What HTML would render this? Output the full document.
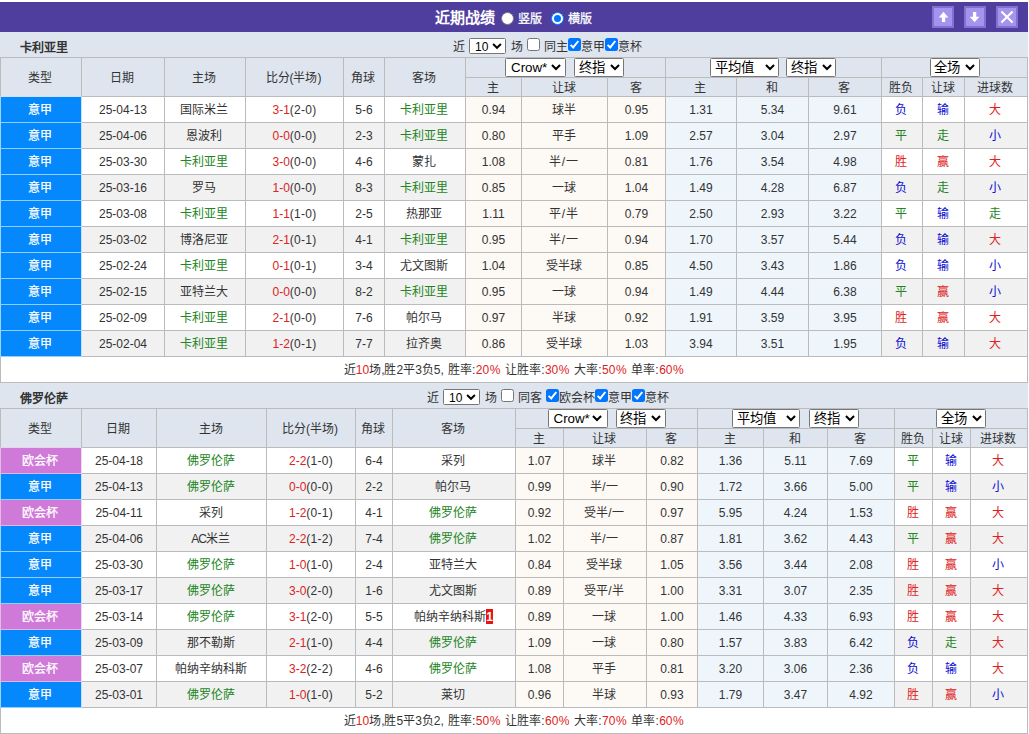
<!DOCTYPE html>
<html lang="zh-CN"><head><meta charset="utf-8"><title>近期战绩</title>
<style>
html,body{margin:0;padding:0;background:#fff;}
body{width:1029px;height:734px;overflow:hidden;position:relative;font-family:"Liberation Sans",sans-serif;font-size:12px;color:#333;}
#bar{position:absolute;left:0;top:2px;width:1028px;height:30px;background:#4f3e9e;}
#bar .ttl{position:absolute;left:435px;top:7px;font-size:15px;line-height:18px;font-weight:bold;color:#fff;white-space:nowrap;}
#bar .rd{position:absolute;top:10px;width:13px;height:13px;box-sizing:border-box;border:1px solid #767676;border-radius:50%;background:#fff;}
#bar .rd.on{border-color:#0075ff;}
#bar .rd.on i{position:absolute;left:1.7px;top:1.7px;width:7.6px;height:7.6px;border-radius:50%;background:#0075ff;}
#bar .rl{position:absolute;top:9px;line-height:16px;color:#fff;white-space:nowrap;}
#bar .btn{position:absolute;top:4px;width:22px;height:22px;box-sizing:border-box;border:2px solid #8272cf;background:#a494ee;}
#bar .btn svg{display:block;}
.strip{position:absolute;left:0;width:1028px;height:25px;background:#dee5ef;}
.strip .tn{position:absolute;left:20px;top:8px;line-height:16px;font-weight:bold;color:#333;white-space:nowrap;}
.ctl{position:absolute;top:0;height:25px;white-space:nowrap;font-size:0;}
.ctl>span{display:inline-block;vertical-align:top;font-size:12px;}
.ctl .c1{width:12px;margin-top:7px;line-height:16px;text-align:center;}
.ctl .c2{width:24px;margin-top:7px;line-height:16px;text-align:center;}
.ctl .c3{width:36px;margin-top:7px;line-height:16px;text-align:center;}
.ctl .sp{width:4px;height:1px;}
.cb{width:13px;height:13px;box-sizing:border-box;border:1px solid #767676;border-radius:2.5px;background:#fff;margin-top:6px;}
.cb.on{border:0;background:#0075ff;}
.cb svg{display:block;}
.sel{display:inline-block;box-sizing:border-box;height:19px;border:1px solid #767676;border-radius:1.5px;background:#fff;color:#000;font-size:13.33px;line-height:17px;text-align:left;position:relative;vertical-align:top;white-space:nowrap;}
.sel .st{padding-left:5px;}
.sel .st.cj{padding-left:3.5px;}
.sel .chev{position:absolute;right:3.5px;top:4.5px;}
.sel.s12{height:16px;font-size:12px;line-height:16px;margin-top:6px;}
.sel.s12 .chev{top:4px;right:3.5px;}
table.t{position:absolute;left:0;width:1028px;table-layout:fixed;border-collapse:separate;border-spacing:0;}
.t th,.t td{box-sizing:border-box;padding:0;margin:0;border:0 solid #bbb;border-right-width:1px;border-bottom-width:1px;text-align:center;font-weight:normal;font-size:12px;line-height:14px;white-space:nowrap;overflow:hidden;vertical-align:middle;}
.t th{background:#dee5ef;color:#333;border-top-width:0;padding:2px 2px 0 0;}
.t .h1 th{border-top-width:1px;height:21px;}
.t .h1 th[rowspan]{height:40px;}
.t .h2 th{height:19px;}
.t .first{border-left-width:1px;}
.t th.sc{font-size:0;line-height:0;vertical-align:top;padding:0;}
.t th.sc .gap{display:inline-block;width:8px;}
.t td{height:26px;color:#333;}
.t tr.odd td{background:#fff;}
.t tr.even td{background:#f1f1f1;}
.t tr td.pa{background:#fdf9f5;}
.t tr td.pb{background:#eef6fc;}
.t td.lg-a{background:#0588fc !important;color:#fff;border-color:#8fd0ff;border-right-color:#c4e2ff;border-left-color:#9fd4ff;}
.t td.lg-b{background:#cf7ad8 !important;color:#fff;border-color:#e0b4ee;border-right-color:#f0d8f2;border-left-color:#e6b8e6;}
.t th.lb{border-bottom-color:#cfe3f6;}
.t th.lb.pk{border-bottom-color:#ecd0f0;}
.t tr.sum td{background:#fff;height:26px;}
.r,.t td.r{color:#dd2222;}
.b,.t td.b{color:#0a0ad2;}
.gn,.t td.gn{color:#228522;}
.gt{color:#228522;}
.card{background:#e11;color:#fff;font-weight:bold;padding:1px 0 0 0;position:relative;left:.5px;}
.t td.cj{padding-right:2px;}
.hs{letter-spacing:.26px;}
.sl{padding:0 .6px;}
.sum td{word-spacing:.42px;}
.pc{padding-left:.5px;letter-spacing:.55px;}
.co{padding:0 .46px;}
.ac{letter-spacing:-1.1px;}
#bar .rl{-webkit-text-stroke:.3px #fff;}
.t td.lg-a,.t td.lg-b{-webkit-text-stroke:.25px #fff;}

</style></head><body>
<div id="bar">
<span class="ttl">近期战绩</span>
<span class="rd" style="left:501px"></span><span class="rl" style="left:518px">竖版</span>
<span class="rd on" style="left:551px"><i></i></span><span class="rl" style="left:568px">横版</span>
<span class="btn" style="left:932px"><svg viewBox="0 0 18 18" width="18" height="18"><path d="M9.5 3.8 L14.3 9.4 L11.2 9.4 L11.2 14 L7.9 14 L7.9 9.4 L4.8 9.4 Z" fill="#fff"/></svg></span>
<span class="btn" style="left:964px"><svg viewBox="0 0 18 18" width="18" height="18"><path d="M8.6 14.3 L13.4 8.8 L10.25 8.8 L10.25 4 L6.95 4 L6.95 8.8 L3.8 8.8 Z" fill="#fff"/></svg></span>
<span class="btn" style="left:996px"><svg viewBox="0 0 18 18" width="18" height="18"><path d="M3.4 3.6 L14.6 14.6 M14.6 3.6 L3.4 14.6" stroke="#fff" stroke-width="2.1" fill="none"/></svg></span>
</div>
<div class="strip" style="top:32px"><span class="tn">卡利亚里</span><div class="ctl" style="left:453px"><span class="c1">近</span><span class="sp"></span><span class="sel s12" style="width:37px"><span class="st">10</span><svg class="chev" viewBox="0 0 10 7" width="10" height="7"><path d="M1.1 1 L5 4.8 L8.9 1" fill="none" stroke="#000" stroke-width="1.9" stroke-linecap="butt"/></svg></span><span class="sp" style="width:5px"></span><span class="c1">场</span><span class="sp"></span><span class="cb"></span><span class="sp"></span><span class="c2">同主</span><span class="cb on"><svg viewBox="0 0 13 13" width="13" height="13"><path d="M2.6 6.9 L5.2 9.4 L10.3 3.0" fill="none" stroke="#fff" stroke-width="2"/></svg></span><span class="c2">意甲</span><span class="cb on"><svg viewBox="0 0 13 13" width="13" height="13"><path d="M2.6 6.9 L5.2 9.4 L10.3 3.0" fill="none" stroke="#fff" stroke-width="2"/></svg></span><span class="c2">意杯</span></div></div>
<table class="t" style="top:57px">
<colgroup><col style="width:82px"><col style="width:83px"><col style="width:81px"><col style="width:98px"><col style="width:41px"><col style="width:81px"><col style="width:56px"><col style="width:86px"><col style="width:58px"><col style="width:71px"><col style="width:72px"><col style="width:73px"><col style="width:41px"><col style="width:42px"><col style="width:63px"></colgroup>
<tr class="h1">
<th rowspan="2" class="first lb">类型</th><th rowspan="2">日期</th><th rowspan="2">主场</th><th rowspan="2">比分(半场)</th><th rowspan="2">角球</th><th rowspan="2">客场</th>
<th colspan="3" class="sc"><span class="sel" style="width:61px;left:-1px"><span class="st">Crow*</span><svg class="chev" style="right:4.5px" viewBox="0 0 10 7" width="10" height="7"><path d="M0.95 1 L5 5.05 L9.05 1" fill="none" stroke="#000" stroke-width="2" stroke-linecap="butt"/></svg></span><span class="gap"></span><span class="sel" style="width:50px;left:-1px"><span class="st cj">终指</span><svg class="chev" viewBox="0 0 10 7" width="10" height="7"><path d="M0.95 1 L5 5.05 L9.05 1" fill="none" stroke="#000" stroke-width="2" stroke-linecap="butt"/></svg></span></th>
<th colspan="3" class="sc"><span class="sel" style="width:69px"><span class="st cj">平均值</span><svg class="chev" viewBox="0 0 10 7" width="10" height="7"><path d="M0.95 1 L5 5.05 L9.05 1" fill="none" stroke="#000" stroke-width="2" stroke-linecap="butt"/></svg></span><span class="gap"></span><span class="sel" style="width:50px;left:-1px"><span class="st cj">终指</span><svg class="chev" viewBox="0 0 10 7" width="10" height="7"><path d="M0.95 1 L5 5.05 L9.05 1" fill="none" stroke="#000" stroke-width="2" stroke-linecap="butt"/></svg></span></th>
<th colspan="3" class="sc"><span class="sel" style="width:50px"><span class="st cj">全场</span><svg class="chev" viewBox="0 0 10 7" width="10" height="7"><path d="M0.95 1 L5 5.05 L9.05 1" fill="none" stroke="#000" stroke-width="2" stroke-linecap="butt"/></svg></span></th>
</tr>
<tr class="h2"><th>主</th><th>让球</th><th>客</th><th>主</th><th>和</th><th>客</th><th>胜负</th><th>让球</th><th>进球数</th></tr>
<tr class="r odd">
<td class="first lg-a cj">意甲</td><td>25-04-13</td><td class="cj">国际米兰</td><td><span class="r">3-1</span><span class="hs">(2-0)</span></td><td>5-6</td><td class="cj"><span class="gt">卡利亚里</span></td>
<td class="pa">0.94</td><td class="pa cj">球半</td><td class="pa">0.95</td>
<td class="pb">1.31</td><td class="pb">5.34</td><td class="pb">9.61</td>
<td class="b cj">负</td><td class="b cj">输</td><td class="r cj">大</td>
</tr>
<tr class="r even">
<td class="first lg-a cj">意甲</td><td>25-04-06</td><td class="cj">恩波利</td><td><span class="r">0-0</span><span class="hs">(0-0)</span></td><td>2-3</td><td class="cj"><span class="gt">卡利亚里</span></td>
<td class="pa">0.80</td><td class="pa cj">平手</td><td class="pa">1.09</td>
<td class="pb">2.57</td><td class="pb">3.04</td><td class="pb">2.97</td>
<td class="gn cj">平</td><td class="gn cj">走</td><td class="b cj">小</td>
</tr>
<tr class="r odd">
<td class="first lg-a cj">意甲</td><td>25-03-30</td><td class="cj"><span class="gt">卡利亚里</span></td><td><span class="r">3-0</span><span class="hs">(0-0)</span></td><td>4-6</td><td class="cj">蒙扎</td>
<td class="pa">1.08</td><td class="pa cj">半<span class="sl">/</span>一</td><td class="pa">0.81</td>
<td class="pb">1.76</td><td class="pb">3.54</td><td class="pb">4.98</td>
<td class="r cj">胜</td><td class="r cj">赢</td><td class="r cj">大</td>
</tr>
<tr class="r even">
<td class="first lg-a cj">意甲</td><td>25-03-16</td><td class="cj">罗马</td><td><span class="r">1-0</span><span class="hs">(0-0)</span></td><td>8-3</td><td class="cj"><span class="gt">卡利亚里</span></td>
<td class="pa">0.85</td><td class="pa cj">一球</td><td class="pa">1.04</td>
<td class="pb">1.49</td><td class="pb">4.28</td><td class="pb">6.87</td>
<td class="b cj">负</td><td class="gn cj">走</td><td class="b cj">小</td>
</tr>
<tr class="r odd">
<td class="first lg-a cj">意甲</td><td>25-03-08</td><td class="cj"><span class="gt">卡利亚里</span></td><td><span class="r">1-1</span><span class="hs">(1-0)</span></td><td>2-5</td><td class="cj">热那亚</td>
<td class="pa">1.11</td><td class="pa cj">平<span class="sl">/</span>半</td><td class="pa">0.79</td>
<td class="pb">2.50</td><td class="pb">2.93</td><td class="pb">3.22</td>
<td class="gn cj">平</td><td class="b cj">输</td><td class="gn cj">走</td>
</tr>
<tr class="r even">
<td class="first lg-a cj">意甲</td><td>25-03-02</td><td class="cj">博洛尼亚</td><td><span class="r">2-1</span><span class="hs">(0-1)</span></td><td>4-1</td><td class="cj"><span class="gt">卡利亚里</span></td>
<td class="pa">0.95</td><td class="pa cj">半<span class="sl">/</span>一</td><td class="pa">0.94</td>
<td class="pb">1.70</td><td class="pb">3.57</td><td class="pb">5.44</td>
<td class="b cj">负</td><td class="b cj">输</td><td class="r cj">大</td>
</tr>
<tr class="r odd">
<td class="first lg-a cj">意甲</td><td>25-02-24</td><td class="cj"><span class="gt">卡利亚里</span></td><td><span class="r">0-1</span><span class="hs">(0-1)</span></td><td>3-4</td><td class="cj">尤文图斯</td>
<td class="pa">1.04</td><td class="pa cj">受半球</td><td class="pa">0.85</td>
<td class="pb">4.50</td><td class="pb">3.43</td><td class="pb">1.86</td>
<td class="b cj">负</td><td class="b cj">输</td><td class="b cj">小</td>
</tr>
<tr class="r even">
<td class="first lg-a cj">意甲</td><td>25-02-15</td><td class="cj">亚特兰大</td><td><span class="r">0-0</span><span class="hs">(0-0)</span></td><td>8-2</td><td class="cj"><span class="gt">卡利亚里</span></td>
<td class="pa">0.95</td><td class="pa cj">一球</td><td class="pa">0.94</td>
<td class="pb">1.49</td><td class="pb">4.44</td><td class="pb">6.38</td>
<td class="gn cj">平</td><td class="r cj">赢</td><td class="b cj">小</td>
</tr>
<tr class="r odd">
<td class="first lg-a cj">意甲</td><td>25-02-09</td><td class="cj"><span class="gt">卡利亚里</span></td><td><span class="r">2-1</span><span class="hs">(0-0)</span></td><td>7-6</td><td class="cj">帕尔马</td>
<td class="pa">0.97</td><td class="pa cj">半球</td><td class="pa">0.92</td>
<td class="pb">1.91</td><td class="pb">3.59</td><td class="pb">3.95</td>
<td class="r cj">胜</td><td class="r cj">赢</td><td class="r cj">大</td>
</tr>
<tr class="r even">
<td class="first lg-a cj">意甲</td><td>25-02-04</td><td class="cj"><span class="gt">卡利亚里</span></td><td><span class="r">1-2</span><span class="hs">(0-1)</span></td><td>7-7</td><td class="cj">拉齐奥</td>
<td class="pa">0.86</td><td class="pa cj">受半球</td><td class="pa">1.03</td>
<td class="pb">3.94</td><td class="pb">3.51</td><td class="pb">1.95</td>
<td class="b cj">负</td><td class="b cj">输</td><td class="r cj">大</td>
</tr>
<tr class="sum"><td colspan="15" class="first">近<span class="r">10</span>场,胜2平3负5, 胜率<span class="co">:</span><span class="r">20<span class="pc">%</span></span> 让胜率<span class="co">:</span><span class="r">30<span class="pc">%</span></span> 大率<span class="co">:</span><span class="r">50<span class="pc">%</span></span> 单率<span class="co">:</span><span class="r">60<span class="pc">%</span></span></td></tr>
</table>
<div class="strip" style="top:383px"><span class="tn">佛罗伦萨</span><div class="ctl" style="left:427px"><span class="c1">近</span><span class="sp"></span><span class="sel s12" style="width:37px"><span class="st">10</span><svg class="chev" viewBox="0 0 10 7" width="10" height="7"><path d="M1.1 1 L5 4.8 L8.9 1" fill="none" stroke="#000" stroke-width="1.9" stroke-linecap="butt"/></svg></span><span class="sp" style="width:5px"></span><span class="c1">场</span><span class="sp"></span><span class="cb"></span><span class="sp"></span><span class="c2">同客</span><span class="sp"></span><span class="cb on"><svg viewBox="0 0 13 13" width="13" height="13"><path d="M2.6 6.9 L5.2 9.4 L10.3 3.0" fill="none" stroke="#fff" stroke-width="2"/></svg></span><span class="c3">欧会杯</span><span class="cb on"><svg viewBox="0 0 13 13" width="13" height="13"><path d="M2.6 6.9 L5.2 9.4 L10.3 3.0" fill="none" stroke="#fff" stroke-width="2"/></svg></span><span class="c2">意甲</span><span class="cb on"><svg viewBox="0 0 13 13" width="13" height="13"><path d="M2.6 6.9 L5.2 9.4 L10.3 3.0" fill="none" stroke="#fff" stroke-width="2"/></svg></span><span class="c2">意杯</span></div></div>
<table class="t" style="top:408px">
<colgroup><col style="width:82px"><col style="width:75px"><col style="width:110px"><col style="width:89px"><col style="width:37px"><col style="width:123px"><col style="width:48px"><col style="width:83px"><col style="width:51px"><col style="width:66px"><col style="width:64px"><col style="width:67px"><col style="width:38px"><col style="width:38px"><col style="width:57px"></colgroup>
<tr class="h1">
<th rowspan="2" class="first lb pk">类型</th><th rowspan="2">日期</th><th rowspan="2">主场</th><th rowspan="2">比分(半场)</th><th rowspan="2">角球</th><th rowspan="2">客场</th>
<th colspan="3" class="sc"><span class="sel" style="width:60px"><span class="st">Crow*</span><svg class="chev" style="right:4.5px" viewBox="0 0 10 7" width="10" height="7"><path d="M0.95 1 L5 5.05 L9.05 1" fill="none" stroke="#000" stroke-width="2" stroke-linecap="butt"/></svg></span><span class="gap"></span><span class="sel" style="width:50px"><span class="st cj">终指</span><svg class="chev" viewBox="0 0 10 7" width="10" height="7"><path d="M0.95 1 L5 5.05 L9.05 1" fill="none" stroke="#000" stroke-width="2" stroke-linecap="butt"/></svg></span></th>
<th colspan="3" class="sc"><span class="sel" style="width:68px;left:-1px"><span class="st cj">平均值</span><svg class="chev" viewBox="0 0 10 7" width="10" height="7"><path d="M0.95 1 L5 5.05 L9.05 1" fill="none" stroke="#000" stroke-width="2" stroke-linecap="butt"/></svg></span><span class="gap"></span><span class="sel" style="width:50px"><span class="st cj">终指</span><svg class="chev" viewBox="0 0 10 7" width="10" height="7"><path d="M0.95 1 L5 5.05 L9.05 1" fill="none" stroke="#000" stroke-width="2" stroke-linecap="butt"/></svg></span></th>
<th colspan="3" class="sc"><span class="sel" style="width:50px"><span class="st cj">全场</span><svg class="chev" viewBox="0 0 10 7" width="10" height="7"><path d="M0.95 1 L5 5.05 L9.05 1" fill="none" stroke="#000" stroke-width="2" stroke-linecap="butt"/></svg></span></th>
</tr>
<tr class="h2"><th>主</th><th>让球</th><th>客</th><th>主</th><th>和</th><th>客</th><th>胜负</th><th>让球</th><th>进球数</th></tr>
<tr class="r odd">
<td class="first lg-b cj">欧会杯</td><td>25-04-18</td><td class="cj"><span class="gt">佛罗伦萨</span></td><td><span class="r">2-2</span><span class="hs">(1-0)</span></td><td>6-4</td><td class="cj">采列</td>
<td class="pa">1.07</td><td class="pa cj">球半</td><td class="pa">0.82</td>
<td class="pb">1.36</td><td class="pb">5.11</td><td class="pb">7.69</td>
<td class="gn cj">平</td><td class="b cj">输</td><td class="r cj">大</td>
</tr>
<tr class="r even">
<td class="first lg-a cj">意甲</td><td>25-04-13</td><td class="cj"><span class="gt">佛罗伦萨</span></td><td><span class="r">0-0</span><span class="hs">(0-0)</span></td><td>2-2</td><td class="cj">帕尔马</td>
<td class="pa">0.99</td><td class="pa cj">半<span class="sl">/</span>一</td><td class="pa">0.90</td>
<td class="pb">1.72</td><td class="pb">3.66</td><td class="pb">5.00</td>
<td class="gn cj">平</td><td class="b cj">输</td><td class="b cj">小</td>
</tr>
<tr class="r odd">
<td class="first lg-b cj">欧会杯</td><td>25-04-11</td><td class="cj">采列</td><td><span class="r">1-2</span><span class="hs">(0-1)</span></td><td>4-1</td><td class="cj"><span class="gt">佛罗伦萨</span></td>
<td class="pa">0.92</td><td class="pa cj">受半<span class="sl">/</span>一</td><td class="pa">0.97</td>
<td class="pb">5.95</td><td class="pb">4.24</td><td class="pb">1.53</td>
<td class="r cj">胜</td><td class="r cj">赢</td><td class="r cj">大</td>
</tr>
<tr class="r even">
<td class="first lg-a cj">意甲</td><td>25-04-06</td><td class="cj"><span class="ac">AC</span>米兰</td><td><span class="r">2-2</span><span class="hs">(1-2)</span></td><td>7-4</td><td class="cj"><span class="gt">佛罗伦萨</span></td>
<td class="pa">1.02</td><td class="pa cj">半<span class="sl">/</span>一</td><td class="pa">0.87</td>
<td class="pb">1.81</td><td class="pb">3.62</td><td class="pb">4.43</td>
<td class="gn cj">平</td><td class="r cj">赢</td><td class="r cj">大</td>
</tr>
<tr class="r odd">
<td class="first lg-a cj">意甲</td><td>25-03-30</td><td class="cj"><span class="gt">佛罗伦萨</span></td><td><span class="r">1-0</span><span class="hs">(1-0)</span></td><td>2-4</td><td class="cj">亚特兰大</td>
<td class="pa">0.84</td><td class="pa cj">受半球</td><td class="pa">1.05</td>
<td class="pb">3.56</td><td class="pb">3.44</td><td class="pb">2.08</td>
<td class="r cj">胜</td><td class="r cj">赢</td><td class="b cj">小</td>
</tr>
<tr class="r even">
<td class="first lg-a cj">意甲</td><td>25-03-17</td><td class="cj"><span class="gt">佛罗伦萨</span></td><td><span class="r">3-0</span><span class="hs">(2-0)</span></td><td>1-6</td><td class="cj">尤文图斯</td>
<td class="pa">0.89</td><td class="pa cj">受平<span class="sl">/</span>半</td><td class="pa">1.00</td>
<td class="pb">3.31</td><td class="pb">3.07</td><td class="pb">2.35</td>
<td class="r cj">胜</td><td class="r cj">赢</td><td class="r cj">大</td>
</tr>
<tr class="r odd">
<td class="first lg-b cj">欧会杯</td><td>25-03-14</td><td class="cj"><span class="gt">佛罗伦萨</span></td><td><span class="r">3-1</span><span class="hs">(2-0)</span></td><td>5-5</td><td class="cj">帕纳辛纳科斯<span class="card">1</span></td>
<td class="pa">0.89</td><td class="pa cj">一球</td><td class="pa">1.00</td>
<td class="pb">1.46</td><td class="pb">4.33</td><td class="pb">6.93</td>
<td class="r cj">胜</td><td class="r cj">赢</td><td class="r cj">大</td>
</tr>
<tr class="r even">
<td class="first lg-a cj">意甲</td><td>25-03-09</td><td class="cj">那不勒斯</td><td><span class="r">2-1</span><span class="hs">(1-0)</span></td><td>4-4</td><td class="cj"><span class="gt">佛罗伦萨</span></td>
<td class="pa">1.09</td><td class="pa cj">一球</td><td class="pa">0.80</td>
<td class="pb">1.57</td><td class="pb">3.83</td><td class="pb">6.42</td>
<td class="b cj">负</td><td class="gn cj">走</td><td class="r cj">大</td>
</tr>
<tr class="r odd">
<td class="first lg-b cj">欧会杯</td><td>25-03-07</td><td class="cj">帕纳辛纳科斯</td><td><span class="r">3-2</span><span class="hs">(2-2)</span></td><td>4-6</td><td class="cj"><span class="gt">佛罗伦萨</span></td>
<td class="pa">1.08</td><td class="pa cj">平手</td><td class="pa">0.81</td>
<td class="pb">3.20</td><td class="pb">3.06</td><td class="pb">2.36</td>
<td class="b cj">负</td><td class="b cj">输</td><td class="r cj">大</td>
</tr>
<tr class="r even">
<td class="first lg-a cj">意甲</td><td>25-03-01</td><td class="cj"><span class="gt">佛罗伦萨</span></td><td><span class="r">1-0</span><span class="hs">(1-0)</span></td><td>5-2</td><td class="cj">莱切</td>
<td class="pa">0.96</td><td class="pa cj">半球</td><td class="pa">0.93</td>
<td class="pb">1.79</td><td class="pb">3.47</td><td class="pb">4.92</td>
<td class="r cj">胜</td><td class="r cj">赢</td><td class="b cj">小</td>
</tr>
<tr class="sum"><td colspan="15" class="first">近<span class="r">10</span>场,胜5平3负2, 胜率<span class="co">:</span><span class="r">50<span class="pc">%</span></span> 让胜率<span class="co">:</span><span class="r">60<span class="pc">%</span></span> 大率<span class="co">:</span><span class="r">70<span class="pc">%</span></span> 单率<span class="co">:</span><span class="r">60<span class="pc">%</span></span></td></tr>
</table>
</body></html>
